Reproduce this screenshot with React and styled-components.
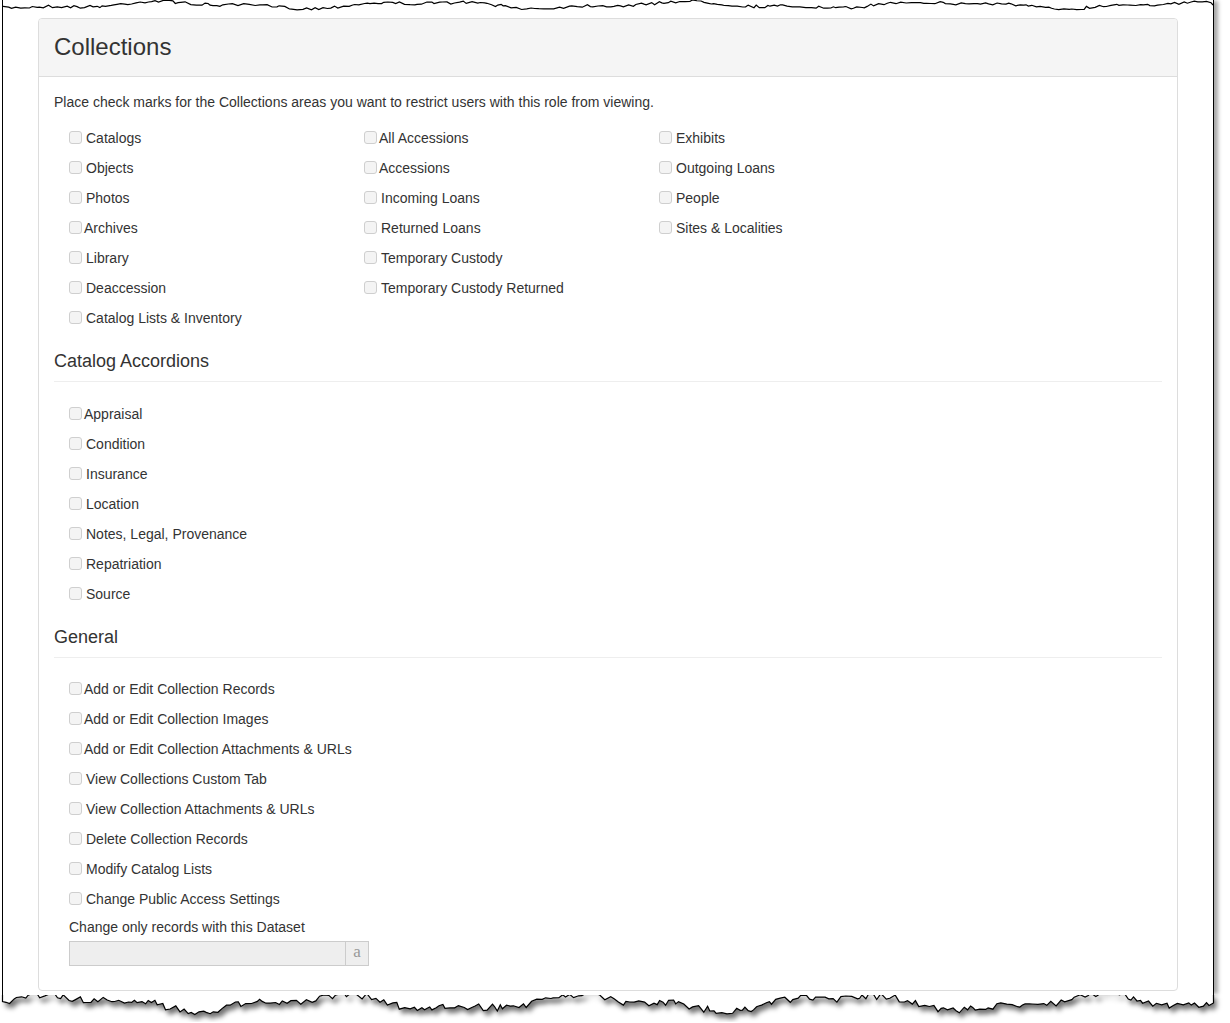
import React from "react";
import styled, { createGlobalStyle } from "styled-components";

const GlobalStyle = createGlobalStyle`
  html, body {
    margin: 0;
    padding: 0;
    background: #fff;
  }
  body {
    font-family: "Liberation Sans", Arial, sans-serif;
    font-size: 14px;
    color: #333;
  }
`;

// small seeded random so the torn edge is the same every render
function rng(seed) {
  let s = seed;
  return () => {
    s = (s * 16807) % 2147483647;
    return (s - 1) / 2147483646;
  };
}

function tornPoints(width, base, amp, seed) {
  const r = rng(seed);
  const pts = [];
  let x = 0;
  while (x < width) {
    const wave =
      Math.sin(x / 41 + seed) * amp * 0.45 +
      Math.sin(x / 17 + seed * 3) * amp * 0.2;
    pts.push([x, base + wave + (r() - 0.5) * amp * 0.5]);
    x += 2 + r() * 4;
  }
  pts.push([width, base]);
  return pts;
}

const toStr = (pts) => pts.map(([x, y]) => `${x.toFixed(1)},${y.toFixed(1)}`).join(" ");

const Page = styled.div`
  width: 1230px;
`;

const Paper = styled.div`
  box-sizing: border-box;
  width: 1212px;
  margin-left: 2px;
  border-left: 1px solid #000;
  border-right: 1px solid #000;
  box-shadow: 5px 0 4px -1px rgba(0, 0, 0, 0.35);
  padding-bottom: 4px;
  background: #fff;
`;

const EdgeSvg = styled.svg`
  display: block;
`;

function TopEdge() {
  const pts = tornPoints(1210, 5, 6, 7);
  return (
    <EdgeSvg width="1210" height="12" viewBox="0 0 1210 12">
      <polyline points={toStr(pts)} fill="none" stroke="#000" strokeWidth="1.2" />
    </EdgeSvg>
  );
}

function BottomEdge() {
  const pts = tornPoints(1211, 8, 14, 3).map(([x, y]) => [x + 2.5, y]);
  const shape = `2.5,-2 ${toStr(pts)} 1213.5,-2`;
  return (
    <EdgeSvg width="1230" height="27" viewBox="0 0 1230 27">
      <defs>
        <filter id="blur" x="-5%" y="-50%" width="110%" height="200%">
          <feGaussianBlur stdDeviation="2.6" />
        </filter>
      </defs>
      <polygon
        points={shape}
        fill="rgba(0,0,0,0.55)"
        transform="translate(3,5)"
        filter="url(#blur)"
      />
      <polygon points={shape} fill="#fff" />
      <polyline
        points={`2.5,0 ${toStr(pts)} 1213.5,0`}
        fill="none"
        stroke="#000"
        strokeWidth="1.2"
      />
    </EdgeSvg>
  );
}

const Panel = styled.div`
  box-sizing: border-box;
  width: 1140px;
  margin: 6px 0 0 35px;
  border: 1px solid #ddd;
  border-radius: 4px;
  background: #fff;
`;

const PanelHeading = styled.div`
  background: #f5f5f5;
  border-bottom: 1px solid #ddd;
  border-radius: 3px 3px 0 0;
  padding: 14px 15px 16px;
`;

const PanelTitle = styled.h3`
  margin: 0;
  font-size: 24px;
  font-weight: 400;
  line-height: 27px;
  color: #333;
`;

const PanelBody = styled.div`
  padding: 15px;
`;

const Intro = styled.p`
  margin: 0 0 11px;
  line-height: 20px;
`;

const Columns = styled.div`
  display: grid;
  grid-template-columns: repeat(3, 295px);
  padding-left: 15px;
`;

const List = styled.div`
  display: flex;
  flex-direction: column;
  padding-left: 15px;
`;

const Column = styled.div`
  display: flex;
  flex-direction: column;
`;

const Row = styled.label`
  display: flex;
  align-items: center;
  height: 30px;
  line-height: 20px;
`;

const Box = styled.span`
  box-sizing: border-box;
  width: 13px;
  height: 13px;
  margin-top: -1px;
  border: 1px solid #cfcfcf;
  border-radius: 3px;
  background: #f4f4f4;
  flex: none;
`;

const RowText = styled.span`
  margin-left: ${(p) => (p.$tight ? "2px" : "4px")};
  white-space: nowrap;
`;

const SectionTitle = styled.h4`
  margin: ${(p) => (p.$first ? "18px 0 17px" : "18px 0 16px")};
  padding-bottom: 10px;
  border-bottom: 1px solid #eee;
  font-size: 18px;
  font-weight: 400;
  line-height: 20px;
  color: #333;
`;

const FieldLabel = styled.div`
  margin: 3px 0 4px 15px;
  line-height: 20px;
`;

const InputGroup = styled.div`
  display: flex;
  margin: 0 0 9px 15px;
  width: 300px;
  height: 25px;
`;

const TextInput = styled.div`
  box-sizing: border-box;
  width: 277px;
  height: 100%;
  background: #eee;
  border: 1px solid #ccc;
`;

const Addon = styled.div`
  box-sizing: border-box;
  width: 24px;
  height: 100%;
  margin-left: -1px;
  background: #eee;
  border: 1px solid #ccc;
  display: flex;
  align-items: center;
  justify-content: center;
  font-family: "Liberation Serif", "Times New Roman", serif;
  font-size: 17px;
  color: #999;
  padding-bottom: 3px;
`;

const areas = [
  [
    ["Catalogs"],
    ["Objects"],
    ["Photos"],
    ["Archives", true],
    ["Library"],
    ["Deaccession"],
    ["Catalog Lists & Inventory"],
  ],
  [
    ["All Accessions", true],
    ["Accessions", true],
    ["Incoming Loans"],
    ["Returned Loans"],
    ["Temporary Custody"],
    ["Temporary Custody Returned"],
  ],
  [["Exhibits"], ["Outgoing Loans"], ["People"], ["Sites & Localities"]],
];

const accordions = [
  ["Appraisal", true],
  ["Condition"],
  ["Insurance"],
  ["Location"],
  ["Notes, Legal, Provenance"],
  ["Repatriation"],
  ["Source"],
];

const general = [
  ["Add or Edit Collection Records", true],
  ["Add or Edit Collection Images", true],
  ["Add or Edit Collection Attachments & URLs", true],
  ["View Collections Custom Tab"],
  ["View Collection Attachments & URLs"],
  ["Delete Collection Records"],
  ["Modify Catalog Lists"],
  ["Change Public Access Settings"],
];

function Check({ label, tight }) {
  return (
    <Row>
      <Box />
      <RowText $tight={tight}>{label}</RowText>
    </Row>
  );
}

export default function App() {
  return (
    <Page>
      <GlobalStyle />
      <Paper>
        <TopEdge />
        <Panel>
          <PanelHeading>
            <PanelTitle>Collections</PanelTitle>
          </PanelHeading>
          <PanelBody>
            <Intro>
              Place check marks for the Collections areas you want to restrict users with this
              role from viewing.
            </Intro>
            <Columns>
              {areas.map((col, i) => (
                <Column key={i}>
                  {col.map(([label, tight]) => (
                    <Check key={label} label={label} tight={tight} />
                  ))}
                </Column>
              ))}
            </Columns>

            <SectionTitle $first>Catalog Accordions</SectionTitle>
            <List>
              {accordions.map(([label, tight]) => (
                <Check key={label} label={label} tight={tight} />
              ))}
            </List>

            <SectionTitle>General</SectionTitle>
            <List>
              {general.map(([label, tight]) => (
                <Check key={label} label={label} tight={tight} />
              ))}
            </List>
            <FieldLabel>Change only records with this Dataset</FieldLabel>
            <InputGroup>
              <TextInput />
              <Addon>a</Addon>
            </InputGroup>
          </PanelBody>
        </Panel>
      </Paper>
      <BottomEdge />
    </Page>
  );
}
